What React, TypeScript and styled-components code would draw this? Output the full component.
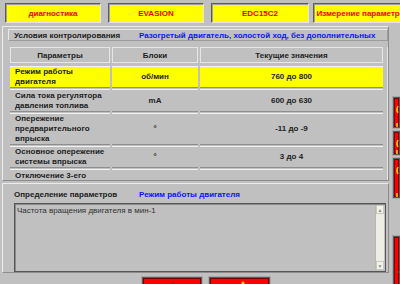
import React from 'react';
import styled, { createGlobalStyle } from 'styled-components';

const GlobalStyle = createGlobalStyle`
    html, body {
        margin: 0;
        padding: 0;
        background: #c0c0c0;
        overflow: hidden;
    }
    body {
        width: 400px;
        height: 284px;
        font-family: 'Liberation Sans', Arial, sans-serif;
    }
`;

const Screen = styled.div`
    width: 400px;
    height: 284px;
    overflow: hidden;
    background: #c0c0c0;
`;

const TopBar = styled.div`
    display: flex;
    gap: 7px;
    padding: 3px 0 0 5px;
    height: 20px;
    white-space: nowrap;
`;

const TabButton = styled.div<{ $w: number; $ml?: number }>`
    flex: none;
    width: ${(p) => p.$w}px;
    height: 20px;
    margin-left: ${(p) => p.$ml ?? 0}px;
    box-sizing: border-box;
    background: #ffff00;
    border: 1px solid;
    border-color: #5c5c5c #e6e6e6 #e6e6e6 #5c5c5c;
    box-shadow: inset 1px 1px #a0a0a0;
    color: #f00000;
    font-weight: bold;
    font-size: 8px;
    display: flex;
    align-items: center;
    justify-content: center;
    overflow: hidden;
`;

const Body = styled.div`
    display: flex;
    margin-top: 3px;
`;

const LeftColumn = styled.div`
    width: 389px;
    flex: none;
    display: flex;
    flex-direction: column;
`;

const Panel = styled.div<{ $h: number; $mt?: number }>`
    margin: ${(p) => p.$mt ?? 0}px 0 0 2px;
    height: ${(p) => p.$h}px;
    box-sizing: border-box;
    border: 1px solid;
    border-color: #ececec #8c8c8c #8c8c8c #ececec;
    overflow: hidden;
    display: flex;
    flex-direction: column;
`;

const ConditionBox = styled.div`
    margin: 2px 0 0 5px;
    height: 12px;
    box-sizing: border-box;
    border: 1px solid;
    border-color: #e8e8e8 #9c9c9c #9c9c9c #e8e8e8;
    display: flex;
    align-items: center;
    font-size: 8px;
    font-weight: bold;
    white-space: nowrap;
    overflow: hidden;
`;

const Label = styled.span<{ $w: number; $pl?: number }>`
    width: ${(p) => p.$w}px;
    flex: none;
    padding-left: ${(p) => p.$pl ?? 5}px;
    color: #202020;
`;

const BlueText = styled.span`
    color: #0a14ff;
`;

const TableWrap = styled.div`
    margin: 6px 0 0 7px;
    width: 378px;
    box-sizing: border-box;
    border-right: 1px solid #e6e6e6;
    padding-right: 3px;
    flex: 1;
    overflow: hidden;
`;

const Grid = styled.div`
    display: grid;
    grid-template-columns: 100px 86px 183px;
    column-gap: 2px;
    row-gap: 1px;
    font-size: 8px;
    font-weight: bold;
    color: #222;
`;

const HeadCell = styled.div`
    height: 16px;
    margin-bottom: 2px;
    box-sizing: border-box;
    border: 1px solid #e6e6e6;
    display: flex;
    align-items: center;
    justify-content: center;
`;

const Cell = styled.div<{ $h: number; $active?: boolean; $left?: boolean }>`
    height: ${(p) => p.$h}px;
    box-sizing: border-box;
    background: ${(p) => (p.$active ? '#ffff00' : '#c0c0c0')};
    border-top: 1px solid #f2f2f2;
    border-bottom: 1px solid #8e8e8e;
    display: flex;
    align-items: center;
    justify-content: ${(p) => (p.$left ? 'flex-start' : 'center')};
    padding-left: ${(p) => (p.$left ? 5 : 0)}px;
    line-height: 10px;
`;

const ClipCell = styled(Cell)`
    align-items: flex-start;
    padding-top: 1px;
`;

const DefinitionHead = styled.div`
    margin: 4px 0 0 0;
    height: 12px;
    display: flex;
    align-items: center;
    font-size: 8px;
    font-weight: bold;
    white-space: nowrap;
`;

const TextArea = styled.div`
    margin: 3px 2px 0 11px;
    height: 69px;
    box-sizing: border-box;
    border: 1px solid #555;
    box-shadow: inset 1px 1px #8a8a8a;
    display: flex;
    font-size: 8px;
    color: #303030;
`;

const AreaText = styled.div`
    flex: 1;
    padding: 2px 0 0 2px;
    white-space: nowrap;
`;

const ScrollBar = styled.div`
    width: 8px;
    margin: 1px 1px 1px 0;
    background: #efeee4;
    border-left: 1px solid #b8b8b0;
    display: flex;
    flex-direction: column;
    justify-content: space-between;
`;

const ScrollArrow = styled.div`
    height: 7px;
    border: 1px solid #c8c8be;
    background: #f4f4ec;
    font-size: 5px;
    color: #888;
    display: flex;
    align-items: center;
    justify-content: center;
`;

const BottomButtons = styled.div`
    display: flex;
    gap: 7px;
    margin: 4px 0 0 142px;
`;

const RedButton = styled.div<{ $w?: number; $h?: number; $mt?: number }>`
    width: ${(p) => (p.$w ? `${p.$w}px` : 'auto')};
    height: ${(p) => (p.$h ? `${p.$h}px` : '12px')};
    margin-top: ${(p) => p.$mt ?? 0}px;
    flex: none;
    box-sizing: border-box;
    background: #ff0000;
    border: 1px solid #5a5a5a;
    box-shadow: 0 0 0 1px #a8a8a8, inset 0 0 0 1px #7a0000;
    position: relative;
    overflow: hidden;
`;

const RightRail = styled.div`
    flex: 1;
    display: flex;
    flex-direction: column;
    padding-left: 4px;
    padding-top: 71px;
`;

const Glyph = styled.svg`
    position: absolute;
    left: 1px;
    top: 2px;
`;

const Squiggle = ({ h }: { h: number }) => (
    <Glyph width="10" height={h} viewBox={`0 0 10 ${h}`}>
        <path d={`M3 6 Q1 10 3 13 M2 ${h - 8} L2 ${h - 4}`} stroke="#ffd800" strokeWidth="1.5" fill="none" />
    </Glyph>
);

const rows = [
    { label: ['Режим работы', 'двигателя'], unit: 'об/мин', value: '760 до 800', h: 22, active: true },
    { label: ['Сила тока регулятора', 'давления топлива'], unit: 'mA', value: '600 до 630', h: 23 },
    { label: ['Опережение', 'предварительного', 'впрыска'], unit: '°', value: '-11 до -9', h: 32 },
    { label: ['Основное опережение', 'системы впрыска'], unit: '°', value: '3 до 4', h: 22 },
];

export default function App() {
    return (
        <Screen>
            <GlobalStyle />
            <TopBar>
                <TabButton $w={96}>диагностика</TabButton>
                <TabButton $w={96}>EVASION</TabButton>
                <TabButton $w={98}>EDC15C2</TabButton>
                <TabButton $w={100} $ml={-3}>Измерение параметров</TabButton>
            </TopBar>
            <Body>
                <LeftColumn>
                    <Panel $h={155}>
                        <ConditionBox>
                            <Label $w={125}>Условия контролирования</Label>
                            <BlueText>Разогретый двигатель, холостой ход, без дополнительных</BlueText>
                        </ConditionBox>
                        <TableWrap>
                            <Grid>
                                <HeadCell>Параметры</HeadCell>
                                <HeadCell>Блоки</HeadCell>
                                <HeadCell>Текущие значения</HeadCell>
                                {rows.map((r) => (
                                    <React.Fragment key={r.value}>
                                        <Cell $h={r.h} $active={r.active} $left>
                                            <div>
                                                {r.label.map((l) => (
                                                    <div key={l}>{l}</div>
                                                ))}
                                            </div>
                                        </Cell>
                                        <Cell $h={r.h} $active={r.active}>
                                            {r.unit}
                                        </Cell>
                                        <Cell $h={r.h} $active={r.active}>
                                            {r.value}
                                        </Cell>
                                    </React.Fragment>
                                ))}
                                <ClipCell $h={14} $left>
                                    Отключение 3-его
                                </ClipCell>
                                <ClipCell $h={14} />
                                <ClipCell $h={14} />
                            </Grid>
                        </TableWrap>
                    </Panel>
                    <Panel $h={90} $mt={2}>
                        <DefinitionHead>
                            <Label $w={125} $pl={11}>
                                Определение параметров
                            </Label>
                            <BlueText>Режим работы двигателя</BlueText>
                        </DefinitionHead>
                        <TextArea>
                            <AreaText>Частота вращения двигателя в мин-1</AreaText>
                            <ScrollBar>
                                <ScrollArrow>▲</ScrollArrow>
                                <ScrollArrow>▼</ScrollArrow>
                            </ScrollBar>
                        </TextArea>
                    </Panel>
                    <BottomButtons>
                        <RedButton $w={60} $h={12}>
                            <Glyph width="20" height="8" viewBox="0 0 20 8" style={{ left: 22, top: 3 }}>
                                <path d="M2 6 Q8 1 14 6" stroke="#4a2a00" strokeWidth="2" fill="none" />
                            </Glyph>
                        </RedButton>
                        <RedButton $w={61} $h={12}>
                            <Glyph width="6" height="6" viewBox="0 0 6 6" style={{ left: 30, top: 2 }}>
                                <circle cx="3" cy="3" r="1.5" fill="#ffd800" />
                            </Glyph>
                        </RedButton>
                    </BottomButtons>
                </LeftColumn>
                <RightRail>
                    <RedButton $h={31}>
                        <Squiggle h={31} />
                    </RedButton>
                    <RedButton $h={24} $mt={3}>
                        <Squiggle h={24} />
                    </RedButton>
                    <RedButton $h={40} $mt={3}>
                        <Squiggle h={40} />
                    </RedButton>
                    <RedButton $h={60} $mt={38}>
                        <Glyph width="10" height="10" viewBox="0 0 10 10" style={{ top: 30 }}>
                            <path d="M2 5 L8 5" stroke="#4a6a00" strokeWidth="1.5" />
                        </Glyph>
                    </RedButton>
                </RightRail>
            </Body>
        </Screen>
    );
}
